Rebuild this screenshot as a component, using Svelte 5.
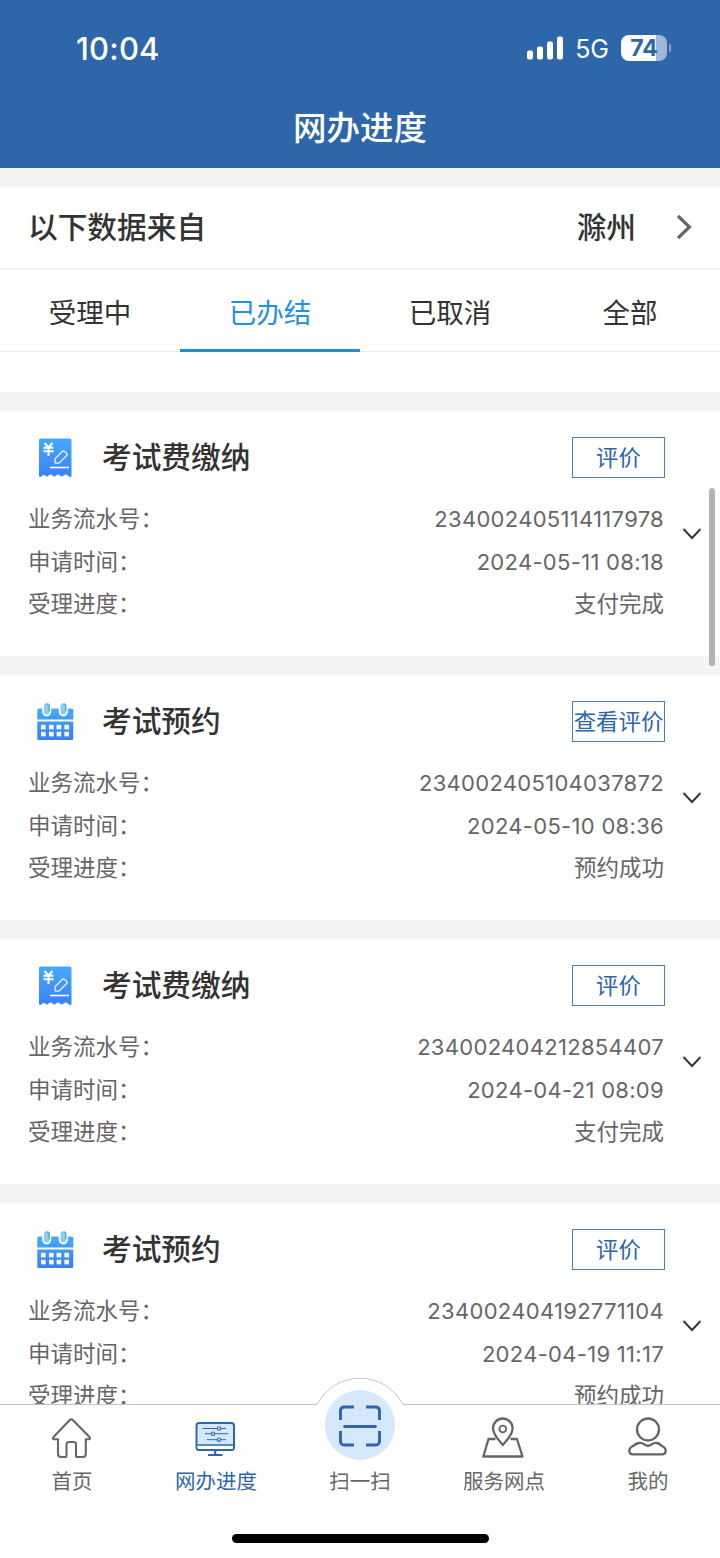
<script>
    const tabs = ['受理中', '已办结', '已取消', '全部'];
    let activeTab = '已办结';

    const records = [
        { type: 'fee', title: '考试费缴纳', action: '评价', serial: '234002405114117978', time: '2024-05-11 08:18', status: '支付完成' },
        { type: 'booking', title: '考试预约', action: '查看评价', serial: '234002405104037872', time: '2024-05-10 08:36', status: '预约成功' },
        { type: 'fee', title: '考试费缴纳', action: '评价', serial: '234002404212854407', time: '2024-04-21 08:09', status: '支付完成' },
        { type: 'booking', title: '考试预约', action: '评价', serial: '234002404192771104', time: '2024-04-19 11:17', status: '预约成功' },
    ];

    const navItems = [
        { id: 'home', label: '首页' },
        { id: 'progress', label: '网办进度' },
        { id: 'scan', label: '扫一扫' },
        { id: 'map', label: '服务网点' },
        { id: 'mine', label: '我的' },
    ];
    let activeNav = 'progress';
</script>

<div class="page">
    <header class="header">
        <div class="status-bar">
            <span class="clock">10:04</span>
            <div class="status-icons">
                <svg class="signal" width="36" height="24" viewBox="0 0 36 24" fill="#fff">
                    <rect x="0" y="14.5" width="6" height="9" rx="2"></rect>
                    <rect x="10" y="10.5" width="6" height="13" rx="2"></rect>
                    <rect x="20" y="5.5" width="6" height="18" rx="2"></rect>
                    <rect x="30" y="0.5" width="6" height="23" rx="2"></rect>
                </svg>
                <span class="network">5G</span>
                <div class="battery"><span>74</span></div>
                <i class="battery-tip"></i>
            </div>
        </div>
        <h1>网办进度</h1>
    </header>

    <main class="content">
        <button class="source">
            <span>以下数据来自</span>
            <span class="city">滁州</span>
            <svg width="16" height="26" viewBox="0 0 16 26" fill="none">
                <path d="M2 2L13.5 13L2 24" stroke="#666" stroke-width="3.2"></path>
            </svg>
        </button>

        <div class="tabs">
            {#each tabs as tab}
                <button class="tab" class:active={tab === activeTab} on:click={() => activeTab = tab}>{tab}</button>
            {/each}
        </div>

        <div class="list">
            {#each records as record}
                <section class="card">
                    <div class="card-head">
                        {#if record.type === 'fee'}
                            <svg class="card-icon" width="38" height="40" viewBox="0 0 38 40" fill="none">
                                <defs>
                                    <linearGradient id="fee-fill" x1="0" y1="0" x2="0" y2="1">
                                        <stop offset="0" stop-color="#47a8f8"></stop>
                                        <stop offset="1" stop-color="#3a82f6"></stop>
                                    </linearGradient>
                                </defs>
                                <path d="M4.500 0.500H34Q35.500 0.500 35.500 2V37.500Q35.500 39.500 33.800 39Q32.500 38.500 31.500 37.300Q29.500 35.500 27.500 37.500Q26 39.500 24.200 37.500Q22 35.500 20 37.500Q18.500 39.500 16.700 37.500Q14.500 35.500 12.500 37.500Q11 39.500 9.200 37.500Q7.500 36 6 38Q3 40 3 37.500V2Q3 0.500 4.500 0.500Z" fill="url(#fee-fill)"></path>
                                <path d="M8.500 5L12.500 9.500L16.500 5M7.500 9.800H17.500M7.500 13.200H17.500M12.500 9.500V18" stroke="#fff" stroke-width="2"></path>
                                <path d="M19.300 20.500L26.500 13.300Q27.500 12.500 28.500 13.400L30.800 15.500Q31.700 16.500 30.700 17.500L23.500 24.700L19.800 25Q19 25 19 24.200Z" stroke="#dff0ff" stroke-width="1.400" stroke-linejoin="round"></path>
                                <path d="M14 29.500H33" stroke="#fff" stroke-width="1.600"></path>
                            </svg>
                        {:else}
                            <svg class="card-icon" width="38" height="40" viewBox="0 0 38 40" fill="none">
                                <defs>
                                    <linearGradient id="booking-fill" x1="0" y1="0" x2="0" y2="1">
                                        <stop offset="0" stop-color="#49abf6"></stop>
                                        <stop offset="1" stop-color="#387ef5"></stop>
                                    </linearGradient>
                                </defs>
                                <path d="M2.500 6.500H35.800Q37.300 6.500 37.300 8V17.500H1.300V8Q1.300 6.500 2.500 6.500ZM1.300 19.500H37.300V36.500Q37.300 38 35.800 38H2.800Q1.300 38 1.300 36.500Z" fill="url(#booking-fill)"></path>
                                <path d="M7 6V9.800A3.700 3.700 0 0 0 14.400 9.800V6M23.600 6V9.800A3.700 3.700 0 0 0 31 9.800V6" stroke="#fff" stroke-width="1.800" fill="#8fcbfa"></path>
                                <path d="M8 7V4A2.700 2.700 0 0 1 13.400 4V7ZM24.600 7V4A2.700 2.700 0 0 1 30 4V7Z" fill="#8fcbfa"></path>
                                <path d="M13.200 9V3.500Q12.800 2.200 11.500 2M29.800 9V3.500Q29.400 2.200 28.100 2" stroke="#49a8f4" stroke-width="1.400" stroke-linecap="round"></path>
                                {#each [5, 13, 20.6, 28.4] as x}
                                    <rect {x} y="22.800" width="4.600" height="4.600" fill="#fff"></rect>
                                    <rect {x} y="29.800" width="4.600" height="4.600" fill="#fff"></rect>
                                {/each}
                            </svg>
                        {/if}
                        <h2>{record.title}</h2>
                        <button class="action">{record.action}</button>
                    </div>
                    <div class="card-body">
                        <dl>
                            <dt>业务流水号：</dt>
                            <dd>{record.serial}</dd>
                            <dt>申请时间：</dt>
                            <dd>{record.time}</dd>
                            <dt>受理进度：</dt>
                            <dd class="status">{record.status}</dd>
                        </dl>
                        <svg class="chevron" width="20" height="14" viewBox="0 0 20 14" fill="none">
                            <path d="M1.500 2L10 11L18.500 2" stroke="#333" stroke-width="1.900"></path>
                        </svg>
                    </div>
                </section>
            {/each}
        </div>
    </main>

    <nav class="nav">
        {#each navItems as item}
            <button class="nav-item" class:active={item.id === activeNav} on:click={() => activeNav = item.id}>
                {#if item.id === 'home'}
                    <svg width="44" height="44" viewBox="0 0 44 44" fill="none" stroke="#666" stroke-width="2.100" stroke-linejoin="round">
                        <path d="M19.500 4.200Q21.300 2.500 23 4.200L39.500 21Q41 23.200 38.500 23.200H35.800V38Q35.800 41 32.800 41H27.500Q26 41 26 39.500V28.500Q26 26 23.800 26H18.800Q16.500 26 16.500 28.500V39.500Q16.500 41 15 41H11Q8 41 8 38V23.200H4.200Q2 23.200 3.500 21Z"></path>
                    </svg>
                {:else if item.id === 'progress'}
                    <svg width="44" height="44" viewBox="0 0 44 44" fill="none" stroke="#2e66a9">
                        <rect x="2.500" y="7" width="37.500" height="27" rx="2.500" fill="#d6e8fc" stroke-width="2"></rect>
                        <path d="M3.500 29.500H39V31.500Q39 33 37.500 33H5Q3.500 33 3.500 31.500Z" fill="#fff" stroke="none"></path>
                        <path d="M3.500 29H39" stroke-width="1.700"></path>
                        <path d="M21.200 34V39M14 39H28.500" stroke-width="2.100"></path>
                        <path d="M8.500 12.500H32M11 17.700H34M13 23.700H32" stroke-width="1"></path>
                        <g fill="#d6e8fc" stroke-width="1.100">
                            <circle cx="25" cy="12.500" r="1.700"></circle>
                            <circle cx="19" cy="17.700" r="1.700"></circle>
                            <circle cx="25" cy="23.700" r="1.700"></circle>
                        </g>
                    </svg>
                {:else if item.id === 'scan'}
                    <svg class="scan-icon" width="88" height="84" viewBox="0 0 88 84" fill="none">
                        <path d="M0 27Q1.300 27 2 25.500A48 48 0 0 1 86 25.500Q86.700 27 88 27V29H0Z" fill="#fff"></path>
                        <path d="M0 26.500Q1.300 26.500 2 25A48 48 0 0 1 86 25Q86.700 26.500 88 26.500" stroke="#c4c4c4"></path>
                        <circle cx="44" cy="47" r="35" fill="#d6e8fc"></circle>
                        <path d="M38 29H28.500Q24.500 29 24.500 33V42M50 29H59.500Q63.500 29 63.500 33V42M24.500 53V63Q24.500 67 28.500 67H38M63.500 53V63Q63.500 67 59.500 67H50M27.500 48.500H60.500" stroke="#2f65ad" stroke-width="2.900"></path>
                    </svg>
                {:else if item.id === 'map'}
                    <svg width="44" height="44" viewBox="0 0 44 44" fill="none" stroke="#666" stroke-width="2.300" stroke-linejoin="round">
                        <path d="M20.800 29C17 24.500 11 19 11 12.300A9.800 9.800 0 0 1 30.600 12.300C30.600 19 24.500 24.500 20.800 29Z"></path>
                        <circle cx="20.800" cy="13" r="3.400" stroke-width="1.900"></circle>
                        <path d="M13.500 23H6.500L1.300 40.500H40.500L35 23H28.500"></path>
                    </svg>
                {:else}
                    <svg width="44" height="44" viewBox="0 0 44 44" fill="none" stroke="#666" stroke-width="2.300">
                        <circle cx="22" cy="13.500" r="11"></circle>
                        <path d="M13 27Q16 26.500 18.500 28.500Q22 31 25.500 28.500Q28 26.500 31 27Q33.500 27.500 36 30Q39.700 31.800 39.700 34.500Q39.700 38.300 36 38.300H7Q3.300 38.300 3.300 34.500Q3.300 31.800 7 30Q10 27.500 13 27Z"></path>
                    </svg>
                {/if}
                <span>{item.label}</span>
            </button>
        {/each}
        <div class="home-indicator"></div>
    </nav>

    <div class="scrollbar"></div>
</div>

<style>
    :global(body) {
        margin: 0;
        background: #fff;
    }
    .page {
        position: relative;
        display: flex;
        flex-direction: column;
        width: 720px;
        height: 1558px;
        overflow: hidden;
        background: #f4f4f4;
        color: #333;
        font-family: Inter, "Noto Sans CJK SC", sans-serif;
    }
    button {
        padding: 0;
        border: 0;
        background: none;
        color: inherit;
        font-family: inherit;
        cursor: pointer;
    }
    h1, h2, dl, dd {
        margin: 0;
    }
    .header {
        flex: none;
        height: 168px;
        background: #2d66a9;
        color: #fff;
    }
    .status-bar {
        display: flex;
        justify-content: space-between;
        align-items: center;
        height: 96px;
        padding: 0 49px 0 76px;
    }
    .clock {
        font-size: 31px;
        font-weight: 500;
        letter-spacing: 0.2px;
    }
    .status-icons {
        display: flex;
        align-items: center;
    }
    .network {
        margin: 2px 12px 0 12px;
        font-size: 25px;
        line-height: 30px;
    }
    .battery {
        width: 46px;
        height: 26px;
        border-radius: 8px;
        background: linear-gradient(90deg, #fff 35px, #9fb7d8 35px);
        color: #2d66a9;
        font-size: 23px;
        font-weight: 700;
        line-height: 26px;
        text-align: center;
    }
    .battery-tip {
        width: 2px;
        height: 8px;
        margin-left: 2px;
        border-radius: 0 3px 3px 0;
        background: #84a9d7;
    }
    h1 {
        font-size: 33.5px;
        font-weight: 500;
        line-height: 64px;
        text-align: center;
    }
    .content {
        flex: 1;
        min-height: 0;
        padding-top: 19px;
        overflow: hidden;
    }
    .source {
        display: flex;
        align-items: center;
        width: 100%;
        height: 83px;
        padding: 0 28px 2px 28px;
        border-bottom: 2px solid #f4f4f4;
        background: #fff;
        font-size: 29.7px;
        font-weight: 500;
    }
    .source span {
        margin-bottom: 2px;
    }
    .source .city {
        margin-left: auto;
        margin-right: 40px;
    }
    .tabs {
        display: grid;
        grid-template-columns: repeat(4, 1fr);
        height: 82px;
        border-bottom: 40px solid #fff;
        background: #fff;
        box-shadow: inset 0 -1px #ebebeb;
    }
    .tab {
        padding-top: 3px;
        border-bottom: 3px solid transparent;
        font-size: 27.5px;
    }
    .tab.active {
        border-color: #258cce;
        color: #2590dc;
    }
    .card {
        height: 219px;
        margin-top: 19px;
        padding: 26px 18px 0 28px;
        background: #fff;
    }
    .card-head {
        display: flex;
        align-items: center;
        height: 41px;
        padding-right: 9px;
    }
    .card-icon {
        margin: 0 28px 0 8px;
    }
    h2 {
        flex: 1;
        font-size: 29.7px;
        font-weight: 500;
        line-height: 41px;
    }
    .action {
        width: 93px;
        height: 41px;
        margin-right: 28px;
        border: 1px solid #4a7fbb;
        color: #2d66a9;
        font-size: 22.4px;
        line-height: 38px;
        white-space: nowrap;
    }
    .card-body {
        display: flex;
        align-items: flex-start;
        justify-content: space-between;
        margin-top: 20px;
    }
    dl {
        display: grid;
        grid-template-columns: auto 1fr;
        grid-auto-rows: 42.5px;
        width: 636px;
        color: #666;
        font-size: 22.5px;
        line-height: 42.5px;
    }
    dd {
        font-size: 22px;
        text-align: right;
        letter-spacing: 0.3px;
    }
    .status {
        font-size: 22.5px;
        letter-spacing: 0;
    }
    .chevron {
        margin-top: 29px;
    }
    .nav {
        position: relative;
        display: grid;
        grid-template-columns: repeat(5, 1fr);
        grid-template-rows: 129px 9px;
        flex: none;
        height: 153px;
        border-top: 1px solid #c4c4c4;
        background: #fff;
        color: #666;
    }
    .nav-item {
        display: flex;
        flex-direction: column;
        align-items: center;
        padding-top: 11px;
        font-size: 20.5px;
        line-height: 30px;
    }
    .nav-item span {
        margin-top: 7px;
    }
    .nav-item.active {
        color: #2d66a9;
    }
    .scan-icon {
        flex: none;
        margin: -38px 0 -2px;
    }
    .home-indicator {
        grid-column: 1 / -1;
        width: 257px;
        justify-self: center;
        border-radius: 5px;
        background: #000;
    }
    .scrollbar {
        position: absolute;
        top: 488px;
        right: 5px;
        width: 6px;
        height: 178px;
        border-radius: 3px;
        background: #b4b4b4;
    }
</style>
